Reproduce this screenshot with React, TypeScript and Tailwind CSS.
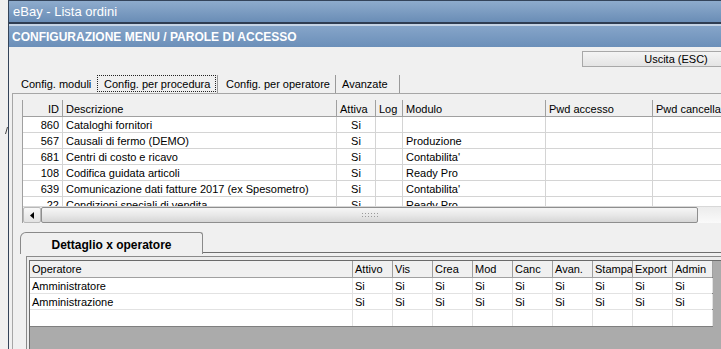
import React from "react";

const topCols = [
  { w: 40, label: "ID", align: "right" },
  { w: 274, label: "Descrizione", align: "left" },
  { w: 39, label: "Attiva", align: "left" },
  { w: 27, label: "Log", align: "left" },
  { w: 143, label: "Modulo", align: "left" },
  { w: 107, label: "Pwd accesso", align: "left" },
  { w: 130, label: "Pwd cancellazione", align: "left" },
];

const topRows = [
  ["860", "Cataloghi fornitori", "Si", "", "", "", ""],
  ["567", "Causali di fermo (DEMO)", "Si", "", "Produzione", "", ""],
  ["681", "Centri di costo e ricavo", "Si", "", "Contabilita'", "", ""],
  ["108", "Codifica guidata articoli", "Si", "", "Ready Pro", "", ""],
  ["639", "Comunicazione dati fatture 2017 (ex Spesometro)", "Si", "", "Contabilita'", "", ""],
  ["22", "Condizioni speciali di vendita", "Si", "", "Ready Pro", "", ""],
];

const botCols = [
  { w: 323, label: "Operatore" },
  { w: 40, label: "Attivo" },
  { w: 40, label: "Vis" },
  { w: 40, label: "Crea" },
  { w: 40, label: "Mod" },
  { w: 40, label: "Canc" },
  { w: 40, label: "Avan." },
  { w: 40, label: "Stampa" },
  { w: 40, label: "Export" },
  { w: 40, label: "Admin" },
];

const botRows = [
  ["Amministratore", "Si", "Si", "Si", "Si", "Si", "Si", "Si", "Si", "Si"],
  ["Amministrazione", "Si", "Si", "Si", "Si", "Si", "Si", "Si", "Si", "Si"],
  ["", "", "", "", "", "", "", "", "", ""],
];

function TopGrid() {
  return (
    <div className="flex flex-col min-w-0 flex-1 overflow-hidden border-l border-[#a0a0a0]">
      <div className="h-[106px] overflow-hidden bg-white">
        <div className="flex h-[17px] bg-[#f0f0f0] border-b border-[#a0a0a0]">
          {topCols.map((c, i) => (
            <div
              key={i}
              style={{ width: c.w }}
              className={`shrink-0 h-full border-r border-[#a0a0a0] px-[3px] leading-[18px] whitespace-nowrap overflow-hidden ${c.align === "right" ? "text-right" : "text-left"}`}
            >
              {c.label}
            </div>
          ))}
        </div>
        {topRows.map((r, ri) => (
          <div key={ri} className="flex h-[16px] border-b border-[#d4d4d4]">
            {r.map((v, ci) => (
              <div
                key={ci}
                style={{ width: topCols[ci].w }}
                className={`shrink-0 h-full border-r border-[#d4d4d4] px-[3px] leading-[17px] whitespace-nowrap overflow-hidden ${ci === 0 ? "text-right" : ci === 2 ? "text-center" : "text-left"}`}
              >
                {v}
              </div>
            ))}
          </div>
        ))}
      </div>
      {/* horizontal scrollbar */}
      <div className="flex h-[17px] bg-[#f0f0f0] border-t border-[#d8d8d8]">
        <div className="w-[18px] shrink-0 flex items-center justify-center bg-gradient-to-b from-[#f8f8f8] to-[#e2e2e2] border border-[#b8b8b8] rounded-[2px]">
          <svg width="5" height="7" viewBox="0 0 5 7">
            <path d="M4 0 L0 3.5 L4 7 Z" fill="#000" />
          </svg>
        </div>
        <div className="w-[657px] shrink-0 flex items-center justify-center bg-gradient-to-b from-[#f6f6f6] via-[#e8e8e8] to-[#d6d6d6] border border-[#8e8e8e] rounded-[2px]">
          <div className="grid grid-cols-6 gap-x-[2px] gap-y-[2px]">
            {Array.from({ length: 12 }).map((_, i) => (
              <div key={i} className="w-[1px] h-[1px] bg-[#9a9a9a]" />
            ))}
          </div>
        </div>
        <div className="flex-1 bg-gradient-to-b from-[#ececec] to-[#fafafa]" />
      </div>
    </div>
  );
}

function BottomGrid() {
  return (
    <div className="flex flex-col flex-1 min-w-0 bg-[#ababab] overflow-hidden">
      <div className="flex flex-col w-[683px] bg-white border-r border-b border-[#7f7f7f]">
        <div className="flex h-[17px] bg-[#f0f0f0] border-b border-[#a0a0a0]">
          {botCols.map((c, i) => (
            <div
              key={i}
              style={{ width: c.w }}
              className="shrink-0 h-full border-r border-[#a0a0a0] pl-[2px] leading-[17px] whitespace-nowrap overflow-hidden"
            >
              {c.label}
            </div>
          ))}
        </div>
        {botRows.map((r, ri) => (
          <div key={ri} className={`flex h-[16px] ${ri < 2 ? "border-b border-[#e2e2e2]" : ""}`}>
            {r.map((v, ci) => (
              <div
                key={ci}
                style={{ width: botCols[ci].w }}
                className="shrink-0 h-full border-r border-[#e2e2e2] pl-[2px] leading-[17px] whitespace-nowrap overflow-hidden"
              >
                {v}
              </div>
            ))}
          </div>
        ))}
      </div>
    </div>
  );
}

export default function App() {
  return (
    <div className="w-[721px] h-[349px] overflow-hidden bg-[#f0f0f0] flex font-['Liberation_Sans',Arial,sans-serif] text-[11px] text-black">
      {/* left strip (background window) */}
      <div className="w-[8px] shrink-0 bg-[#f0f0f0] pt-[127px] pl-[5px]">
        <svg width="3" height="7" viewBox="0 0 3 7">
          <path d="M2.5 0 L0.5 7" stroke="#444" strokeWidth="1" />
        </svg>
      </div>
      {/* window */}
      <div className="flex-1 min-w-0 flex flex-col border-l border-t border-[#34445a]">
        <div className="h-[21px] shrink-0 bg-gradient-to-b from-[#8eaccd] to-[#6a8db6] text-white text-[13px] leading-[22px] pl-[4px] whitespace-nowrap">
          eBay - Lista ordini
        </div>
        <div className="h-[2px] shrink-0 bg-[#2f3d52]" />
        <div className="h-[2px] shrink-0 bg-[#c4d3e4]" />
        <div className="h-[21px] shrink-0 bg-gradient-to-b from-[#86a5c9] to-[#6b8fb9] text-white text-[12px] font-bold leading-[22px] pl-[3px] whitespace-nowrap">
          CONFIGURAZIONE MENU / PAROLE DI ACCESSO
        </div>
        {/* button row */}
        <div className="flex shrink-0 pt-[4px] pl-[573px]">
          <div className="w-[188px] shrink-0 h-[16px] border border-[#a8a8a8] bg-gradient-to-b from-[#f4f4f4] to-[#e4e4e4] text-center leading-[15px] text-[11px]">
            Uscita (ESC)
          </div>
        </div>
        {/* tabs */}
        <div className="flex shrink-0 mt-[8px] pl-[4px] h-[18px]">
          <div className="w-[84px] shrink-0 pl-[8px] leading-[19px] whitespace-nowrap">Config. moduli</div>
          <div className="w-[121px] shrink-0 border-r border-[#9a9a9a] pr-[1px]">
            <div className="h-[17px] border border-dotted border-[#222] pl-[6px] leading-[17px] whitespace-nowrap">
              Config. per procedura
            </div>
          </div>
          <div className="w-[118px] shrink-0 border-r border-[#9a9a9a] pl-[8px] leading-[19px] whitespace-nowrap">
            Config. per operatore
          </div>
          <div className="w-[64px] shrink-0 border-r border-[#9a9a9a] pl-[6px] leading-[19px] whitespace-nowrap">
            Avanzate
          </div>
        </div>
        {/* main panel */}
        <div className="flex-1 min-h-0 ml-[3px] border-l border-t border-[#a6a6a6] flex flex-col bg-[#f0f0f0]">
          <div className="flex pt-[6px] pl-[9px]">
            <TopGrid />
          </div>
          {/* lower tab control */}
          <div className="flex flex-col mt-[9px] pl-[7px] flex-1 min-h-0">
            <div className="flex h-[21px] shrink-0">
              <div className="w-[183px] shrink-0 h-[22px] border-l border-t border-r border-[#8a8a8a] rounded-tl-[6px] rounded-tr-[3px] bg-[#f0f0f0] text-center font-bold text-[12px] leading-[25px] whitespace-nowrap relative z-10">
                Dettaglio x operatore
              </div>
              <div className="flex-1 border-b border-[#6f6f6f]" />
            </div>
            <div className="flex-1 min-h-0 flex pl-[6px] pt-[3px]">
              <div className="flex-1 min-w-0 flex border-l border-t border-[#8a8a8a] pl-[2px] pt-[3px] bg-[#ececec]">
                <div className="flex-1 min-w-0 flex border-l border-t border-[#6a6a6a]">
                  <BottomGrid />
                </div>
              </div>
            </div>
          </div>
        </div>
      </div>
    </div>
  );
}
